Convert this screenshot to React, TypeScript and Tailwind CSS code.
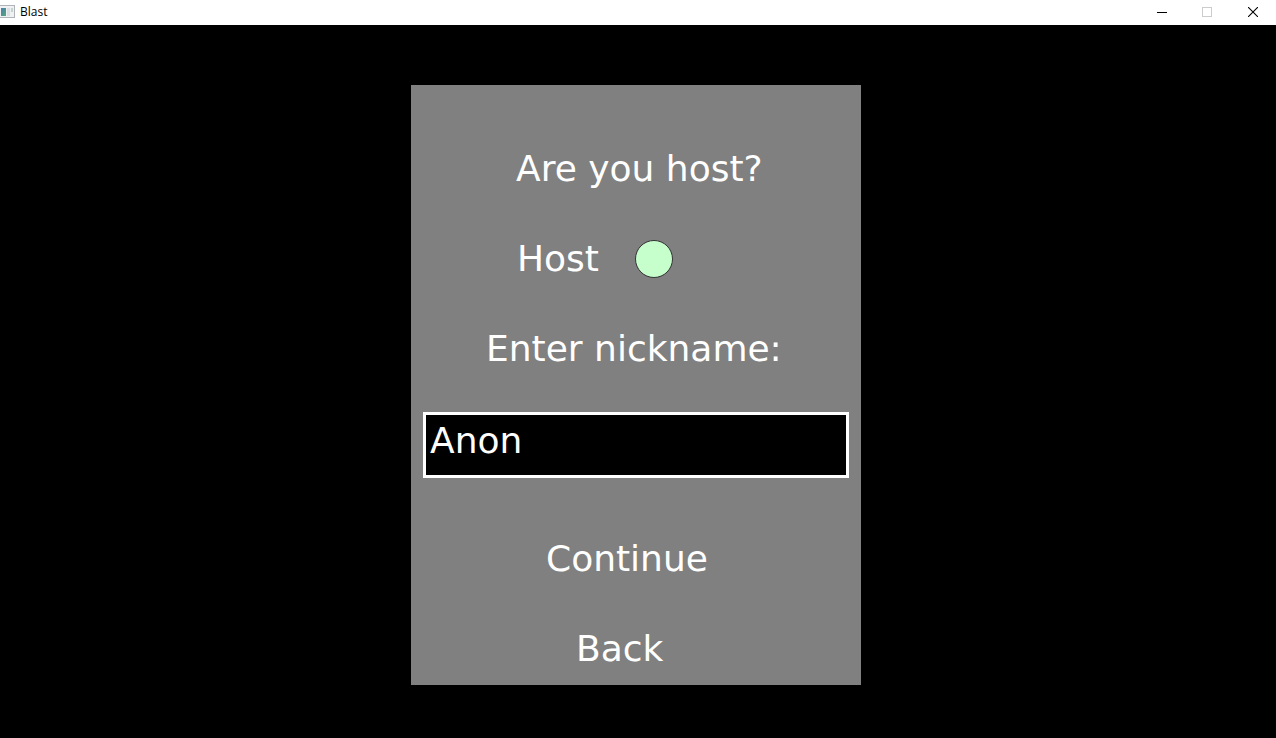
import { useState } from "react";

function AppIcon() {
  return (
    <svg width="16" height="16" viewBox="0 0 16 16" shapeRendering="crispEdges" aria-hidden="true">
      <defs>
        <linearGradient id="pane" x1="0" y1="0" x2="1" y2="1">
          <stop offset="0" stopColor="#4a7fb0" />
          <stop offset="1" stopColor="#58a878" />
        </linearGradient>
      </defs>
      <rect x="0" y="1" width="15" height="13" fill="#b0b4b8" />
      <rect x="0" y="2" width="14" height="11" fill="#f0f1f3" />
      <rect x="1" y="4" width="5" height="8" fill="url(#pane)" />
      <rect x="7" y="4" width="3" height="8" fill="#dcdfe3" />
      <rect x="11" y="4" width="2" height="4" fill="#c3d3cf" />
    </svg>
  );
}

function TitleBar() {
  return (
    <header className="flex h-[25px] shrink-0 items-center justify-between bg-white pb-px text-black">
      <div className="flex items-center gap-1">
        <AppIcon />
        <span className="font-['Open_Sans','Noto_Sans',sans-serif] text-[12px] leading-4">Blast</span>
      </div>
      <div className="flex h-full">
        <button type="button" aria-label="Minimize" className="flex w-[45px] items-center justify-center">
          <svg width="10" height="10" viewBox="0 0 10 10" shapeRendering="crispEdges">
            <path d="M0 5.5h10" stroke="#000" />
          </svg>
        </button>
        <button type="button" aria-label="Maximize" disabled className="flex w-[46px] items-center justify-center">
          <svg width="10" height="10" viewBox="0 0 10 10" shapeRendering="crispEdges">
            <rect x="0.5" y="0.5" width="9" height="9" fill="none" stroke="#ccc" />
          </svg>
        </button>
        <button type="button" aria-label="Close" className="flex w-[46px] items-center justify-center">
          <svg width="10" height="10" viewBox="0 0 10 10">
            <path d="M0 0l10 10M10 0L0 10" stroke="#000" strokeWidth="1.1" />
          </svg>
        </button>
      </div>
    </header>
  );
}

export default function App() {
  const [nickname, setNickname] = useState("Anon");
  const [host, setHost] = useState(true);
  return (
    <div className="flex min-h-screen flex-col bg-black">
      <TitleBar />
      <main className="flex grow items-start justify-center pt-[60px] pr-1">
        <form
          onSubmit={(e) => e.preventDefault()}
          className="flex w-[450px] flex-col bg-[#808080] px-3 pt-[60px] pb-3 font-['DejaVu_Sans',sans-serif] text-[36px] leading-12 text-white"
        >
          <h1 className="pl-[93px]">Are you host?</h1>
          <label className="mt-[42px] flex items-center gap-9 pl-[94px]">
            Host
            <input
              type="checkbox"
              checked={host}
              onChange={(e) => setHost(e.target.checked)}
              className="size-[38px] appearance-none rounded-full border border-[#333333] bg-white checked:bg-[#c6ffcc]"
            />
          </label>
          <label htmlFor="nickname" className="mt-[42px] pl-[63px]">
            Enter nickname:
          </label>
          <input
            id="nickname"
            value={nickname}
            onChange={(e) => setNickname(e.target.value)}
            className="mt-[39px] h-[66px] w-full border-3 border-white bg-black px-1 pb-2.5 outline-none"
          />
          <button type="submit" className="mt-[57px] ml-[123px] self-start">
            Continue
          </button>
          <button type="button" className="mt-[42px] ml-[153px] self-start">
            Back
          </button>
        </form>
      </main>
    </div>
  );
}
